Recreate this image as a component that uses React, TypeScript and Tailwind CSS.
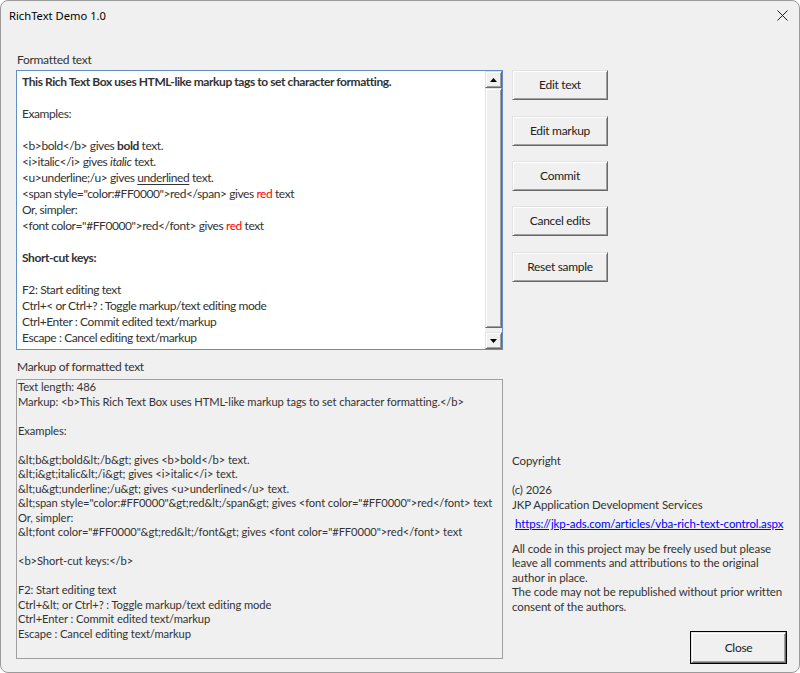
import React from "react";

const Btn3D = ({ children, className = "" }: { children: React.ReactNode; className?: string }) => (
  <div
    className={
      "flex items-center justify-center bg-[#f0f0f0] border border-t-[#e3e3e3] border-l-[#e3e3e3] border-r-[#696969] border-b-[#696969] shadow-[inset_1px_1px_0_#ffffff,inset_-1px_-1px_0_#a0a0a0] text-[12px] tracking-[-0.3px] text-[#222] " +
      className
    }
  >
    {children}
  </div>
);

const Arrow = ({ down = false }: { down?: boolean }) => (
  <div className="w-[17px] h-[17px] flex items-center justify-center bg-[#f0f0f0] border border-t-[#e3e3e3] border-l-[#e3e3e3] border-r-[#696969] border-b-[#696969] shadow-[inset_1px_1px_0_#ffffff,inset_-1px_-1px_0_#a0a0a0]">
    <svg width="7" height="4" viewBox="0 0 7 4">
      {down ? <polygon points="0,0 7,0 3.5,4" fill="#000" /> : <polygon points="0,4 7,4 3.5,0" fill="#000" />}
    </svg>
  </div>
);

const L = ({ children }: { children?: React.ReactNode }) => (
  <div className="h-[16px] leading-[16px] whitespace-pre">{children ?? " "}</div>
);
const M = ({ children }: { children?: React.ReactNode }) => (
  <div className="h-[14.5px] leading-[14.5px] whitespace-pre">{children ?? " "}</div>
);

export default function App() {
  return (
    <div className="w-[800px] h-[673px] bg-[#f0f0f0] border border-[#9a9a9a] rounded-[8px] overflow-hidden flex flex-col font-['Lato',sans-serif] text-[#333]">
      <div className="h-[31px] flex items-center justify-between pl-[8px] pr-[11px]">
        <span className="font-['Segoe_UI','Noto_Sans',sans-serif] text-[11.2px] text-black">RichText Demo 1.0</span>
        <svg width="11" height="11" viewBox="0 0 11 11" className="mt-[-2px]">
          <path d="M0.5 0.5 L10.5 10.5 M10.5 0.5 L0.5 10.5" stroke="#1a1a1a" strokeWidth="1" />
        </svg>
      </div>
      <div className="flex pl-[15px] gap-[9px]">
        {/* Left column */}
        <div className="w-[487px] flex flex-col pt-[20px]">
          <div className="h-[16px] leading-[16px] pl-[1px] text-[12px] tracking-[-0.3px] text-[#333]">Formatted text</div>
          <div className="mt-[2px] h-[280px] bg-white border border-[#5f8dc4] flex">
            <div className="flex-1 pl-[5px] pt-[3px] text-[12px] tracking-[-0.42px] text-[#333] overflow-hidden">
              <L><b>This Rich Text Box uses HTML-like markup tags to set character formatting.</b></L>
              <L />
              <L>Examples:</L>
              <L />
              <L>{"<b>bold</b> gives "}<b>bold</b>{" text."}</L>
              <L>{"<i>italic</i> gives "}<i>italic</i>{" text."}</L>
              <L>{"<u>underline;/u> gives "}<u className="underline-offset-2">underlined</u>{" text."}</L>
              <L>{'<span style="color:#FF0000">red</span> gives '}<span className="text-[#ff0000]">red</span>{" text"}</L>
              <L>Or, simpler:</L>
              <L>{'<font color="#FF0000">red</font> gives '}<span className="text-[#ff0000]">red</span>{" text"}</L>
              <L />
              <L><b>Short-cut keys:</b></L>
              <L />
              <L>F2: Start editing text</L>
              <L>{"Ctrl+< or Ctrl+? : Toggle markup/text editing mode"}</L>
              <L>Ctrl+Enter : Commit edited text/markup</L>
              <L>Escape : Cancel editing text/markup</L>
            </div>
            <div className="w-[17px] flex flex-col bg-[#f0f0f0]">
              <Arrow />
              <div className="flex-1 flex flex-col">
                <div className="h-[240px] bg-[#f0f0f0] border border-t-[#e3e3e3] border-l-[#e3e3e3] border-r-[#696969] border-b-[#696969] shadow-[inset_1px_1px_0_#ffffff,inset_-1px_-1px_0_#a0a0a0]" />
              </div>
              <Arrow down />
            </div>
          </div>
          <div className="mt-[9px] h-[16px] leading-[16px] pl-[1px] text-[12px] tracking-[-0.3px] text-[#333]">Markup of formatted text</div>
          <div className="mt-[4px] h-[280px] bg-[#f0f0f0] border border-[#a0a0a0] pl-[1px] text-[11.2px] tracking-[-0.1px] text-[#333] overflow-hidden">
            <M>Text length: 486</M>
            <M>{"Markup: <b>This Rich Text Box uses HTML-like markup tags to set character formatting.</b>"}</M>
            <M />
            <M>Examples:</M>
            <M />
            <M>{"&lt;b&gt;bold&lt;/b&gt; gives <b>bold</b> text."}</M>
            <M>{"&lt;i&gt;italic&lt;/i&gt; gives <i>italic</i> text."}</M>
            <M>{"&lt;u&gt;underline;/u&gt; gives <u>underlined</u> text."}</M>
            <M>{'&lt;span style="color:#FF0000"&gt;red&lt;/span&gt; gives <font color="#FF0000">red</font> text'}</M>
            <M>Or, simpler:</M>
            <M>{'&lt;font color="#FF0000"&gt;red&lt;/font&gt; gives <font color="#FF0000">red</font> text'}</M>
            <M />
            <M>{"<b>Short-cut keys:</b>"}</M>
            <M />
            <M>F2: Start editing text</M>
            <M>{"Ctrl+&lt; or Ctrl+? : Toggle markup/text editing mode"}</M>
            <M>Ctrl+Enter : Commit edited text/markup</M>
            <M>Escape : Cancel editing text/markup</M>
          </div>
        </div>
        {/* Right column */}
        <div className="w-[275px] flex flex-col pt-[38px]">
          <Btn3D className="w-[96px] h-[30px]">Edit text</Btn3D>
          <Btn3D className="w-[96px] h-[30px] mt-[16px]">Edit markup</Btn3D>
          <Btn3D className="w-[96px] h-[30px] mt-[15px]">Commit</Btn3D>
          <Btn3D className="w-[96px] h-[30px] mt-[15px]">Cancel edits</Btn3D>
          <Btn3D className="w-[96px] h-[30px] mt-[16px]">Reset sample</Btn3D>
          <div className="mt-[172px] text-[11.5px] tracking-[-0.1px] text-[#333]">
            <M>Copyright</M>
            <M />
            <M>(c) 2026</M>
            <M>JKP Application Development Services</M>
            <div className="mt-[5px] pl-[3px] h-[14.5px] leading-[14.5px] text-[#0000ff] underline whitespace-pre">
              https://jkp-ads.com/articles/vba-rich-text-control.aspx
            </div>
            <div className="mt-[10px]">
              <M>All code in this project may be freely used but please</M>
              <M>leave all comments and attributions to the original</M>
              <M>author in place.</M>
              <M>The code may not be republished without prior written</M>
              <M>consent of the authors.</M>
            </div>
          </div>
          <div className="mt-[17px] flex justify-end">
            <div className="border border-black">
              <Btn3D className="w-[95px] h-[31px]">Close</Btn3D>
            </div>
          </div>
        </div>
      </div>
    </div>
  );
}
